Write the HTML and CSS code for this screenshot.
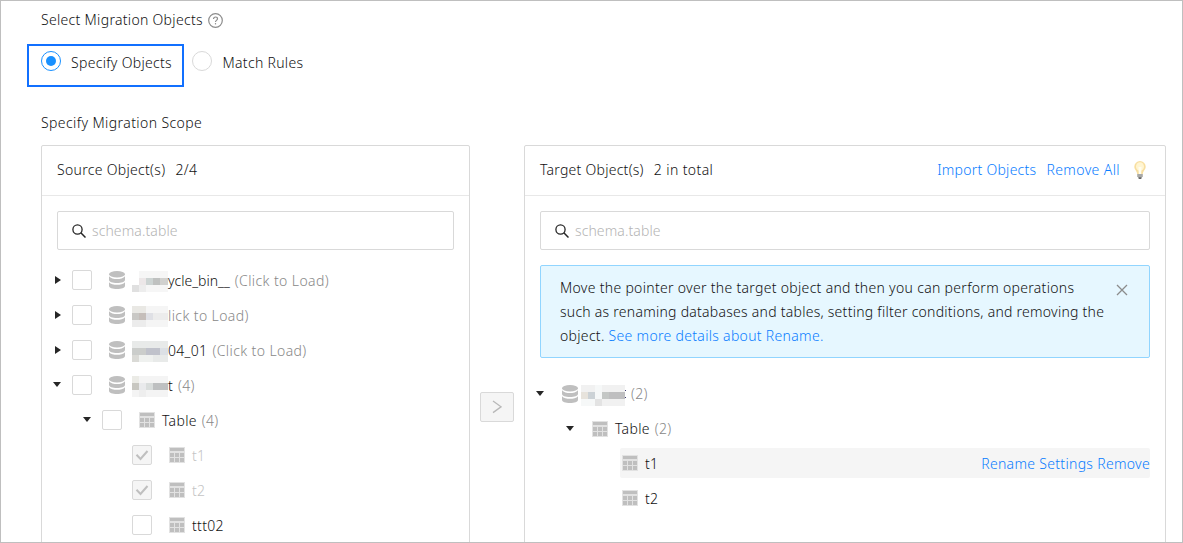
FILE: index.html
```html
<!DOCTYPE html>
<html lang="en">
<head>
<meta charset="utf-8">
<title>Select Migration Objects</title>
<link rel="stylesheet" href="styles.css">
</head>
<body>
<svg class="defs" aria-hidden="true">
  <symbol id="db" viewBox="0 0 16 18"><ellipse cx="8" cy="3.2" rx="8" ry="3.2"/><path d="M0 5.2C1.6 7.4 4.8 8 8 8s6.400-.6 8-2.800V9c0 1.700-3.600 3.100-8 3.100S0 10.700 0 9z"/><path d="M0 11.200C1.600 13.200 4.800 13.800 8 13.800s6.400-.6 8-2.600v3.700C16 16.600 12.400 18 8 18s-8-1.400-8-3.100z"/></symbol>
  <symbol id="table" viewBox="0 0 16 16"><path class="grid-back" d="M0 0h16v16H0z"/><path d="M1 1h14v3H1zM1 6h4v4H1zM6 6h4v4H6zM11 6h4v4h-4zM1 11h4v4H1zM6 11h4v4H6zM11 11h4v4h-4z"/></symbol>
  <symbol id="search" viewBox="0 0 14 14"><circle cx="5.500" cy="5.500" r="4.600" fill="none" stroke="currentColor" stroke-width="1.300"/><path d="M8.800 8.800l4.700 4.700" stroke="currentColor" stroke-width="1.500"/></symbol>
</svg>
<main class="page">
  <h1 class="title"><span>Select Migration Objects</span>
    <svg class="help" viewBox="0 0 15 15"><circle cx="7.500" cy="7.500" r="6.800"/><path d="M5.500 6.100c0-1.300.9-2.100 2-2.100s2 .8 2 1.800c0 1.500-2 1.600-2 3.100"/><path d="M7.500 10.100v1.300"/></svg>
  </h1>
  <div class="modes">
    <label class="mode mode-active"><i class="radio radio-on"></i><span>Specify Objects</span></label>
    <label class="mode"><i class="radio"></i><span>Match Rules</span></label>
  </div>
  <h2 class="scope"><span>Specify Migration Scope</span></h2>
  <div class="transfer">
    <section class="panel source">
      <header class="head"><span>Source Object(s)</span><span class="count">2/4</span></header>
      <div class="search"><svg><use href="#search"/></svg><span>schema.table</span></div>
      <div class="tree">
        <div class="row"><i class="caret right"></i><i class="check"></i><svg class="db"><use href="#db"/></svg>
          <svg class="mosaic" viewBox="0 0 36 21" shape-rendering="crispEdges"><path fill="#fff" d="M0 0h36v21H0z"/><path fill="#f6f6f6" d="M7 0h29v7H7zM14 14h22v7H14z"/><path fill="#ece7e8" d="M7 7h7v7H7z"/><path fill="#cdd4d3" d="M14 7h7v7h-7z"/><path fill="#bfc1c0" d="M21 7h7v7h-7z"/><path fill="#d1d1cf" d="M28 7h8v7h-8z"/><path fill="#e0e0e0" d="M0 14h7v7H0z"/><path fill="#ededed" d="M7 14h7v7H7z"/></svg>
          <span class="name tight">ycle_bin__</span><span class="note loose">(Click to Load)</span></div>
        <div class="row"><i class="caret right"></i><i class="check"></i><svg class="db"><use href="#db"/></svg>
          <svg class="mosaic" viewBox="0 0 36 21" shape-rendering="crispEdges"><path fill="#f5f5f5" d="M0 0h36v21H0z"/><path fill="#e9e8e4" d="M0 0h14v7H0z"/><path fill="#c9c8c5" d="M0 7h7v7H0z"/><path fill="#c5beba" d="M7 7h7v7H7z"/><path fill="#dfe0e5" d="M14 7h7v7h-7z"/><path fill="#ececec" d="M21 7h15v7H21zM0 14h14v7H0z"/></svg>
          <span class="note loose">lick to Load)</span></div>
        <div class="row"><i class="caret right"></i><i class="check"></i><svg class="db"><use href="#db"/></svg>
          <svg class="mosaic" viewBox="0 0 36 21" shape-rendering="crispEdges"><path fill="#e8eae9" d="M0 0h36v21H0z"/><path fill="#cbcdcb" d="M0 7h14v7H0z"/><path fill="#c0c2cb" d="M14 7h14v7H14z"/><path fill="#dce0e5" d="M28 7h8v7h-8z"/><path fill="#dadad6" d="M0 14h7v7H0z"/><path fill="#eff1ef" d="M7 14h14v7H7z"/></svg>
          <span class="name">04_01</span><span class="note loose">(Click to Load)</span></div>
        <div class="row"><i class="caret down"></i><i class="check"></i><svg class="db"><use href="#db"/></svg>
          <svg class="mosaic" viewBox="0 0 36 21" shape-rendering="crispEdges"><path fill="#f4f4f4" d="M0 0h36v21H0z"/><path fill="#ebebe6" d="M0 0h7v7H0z"/><path fill="#c8c7c1" d="M0 7h7v7H0z"/><path fill="#e9eaec" d="M7 7h7v7H7z"/><path fill="#d9dddc" d="M14 7h7v7h-7z"/><path fill="#bec0c1" d="M21 7h15v7H21z"/><path fill="#eee" d="M7 14h7v7H7z"/></svg>
          <span class="name">t</span><span class="note">(4)</span></div>
        <div class="row level-1"><i class="caret down"></i><i class="check"></i><svg class="tb"><use href="#table"/></svg><span class="name">Table</span><span class="note">(4)</span></div>
        <div class="row level-2 off"><i class="check checked"><svg viewBox="0 0 14 12"><path d="M1.500 5.800l4 4.200 7-8"/></svg></i><svg class="tb"><use href="#table"/></svg><span class="name">t1</span></div>
        <div class="row level-2 off"><i class="check checked"><svg viewBox="0 0 14 12"><path d="M1.500 5.800l4 4.200 7-8"/></svg></i><svg class="tb"><use href="#table"/></svg><span class="name">t2</span></div>
        <div class="row level-2"><i class="check"></i><svg class="tb"><use href="#table"/></svg><span class="name">ttt02</span></div>
      </div>
    </section>
    <button class="move" type="button" aria-label="Move"><svg viewBox="0 0 10 14"><path d="M1 1l8 5.800L1 12.600"/></svg></button>
    <section class="panel target">
      <header class="head"><span class="snug">Target Object(s)</span><span class="count">2 in total</span>
        <nav class="actions"><a class="snug">Import Objects</a><a class="loose">Remove All</a>
          <svg class="bulb" viewBox="0 0 12 18"><path fill="#f8dfa0" d="M6 0a5.700 5.700 0 0 0-5.700 5.700C.3 8.800 3 9.800 3.200 13h5.600C9 9.800 11.700 8.800 11.700 5.700A5.700 5.700 0 0 0 6 0z"/><ellipse cx="6" cy="5.500" rx="4" ry="4.300" fill="#fff5d2"/><path fill="#fffdf0" d="M4.500 6h3L7.200 13H4.800z"/><path fill="#a9a9a6" d="M3.200 13h5.600v2.600L7.300 17H4.700l-1.500-1.400z"/><path fill="#666" d="M4.600 16.300h2.800V18H4.600z"/></svg>
        </nav></header>
      <div class="search"><svg><use href="#search"/></svg><span>schema.table</span></div>
      <div class="alert"><p>Move the pointer over the target object and then you can perform operations<br><span class="snug">such as renaming databases and tables, setting filter conditions, and removing the</span><br>object. <a>See more details about Rename.</a></p>
        <svg class="close" viewBox="0 0 12 12"><path d="M1 1l10 10M11 1L1 11"/></svg></div>
      <div class="tree">
        <div class="row"><i class="caret down"></i><svg class="db"><use href="#db"/></svg>
          <svg class="mosaic wide" viewBox="0 0 44 21" shape-rendering="crispEdges"><path fill="#f1f1f1" d="M0 0h44v21H0z"/><path fill="#f6f8f8" d="M14 0h7v14h-7zM0 14h14v7H0z"/><path fill="#e7e3dc" d="M0 7h7v7H0z"/><path fill="#ccd2d6" d="M7 7h7v7H7z"/><path fill="#c4c7c5" d="M21 7h7v7h-7z"/><path fill="#bfbfc0" d="M28 7h16v7H28z"/><path fill="#e3e3e3" d="M14 14h7v7h-7z"/></svg>
          <i class="sliver"></i><span class="note">(2)</span></div>
        <div class="row level-1"><i class="caret down"></i><svg class="tb"><use href="#table"/></svg><span class="name">Table</span><span class="note">(2)</span></div>
        <div class="row level-2 hover"><svg class="tb"><use href="#table"/></svg><span class="name">t1</span><nav class="ops"><a>Rename</a><a>Settings</a><a>Remove</a></nav></div>
        <div class="row level-2"><svg class="tb"><use href="#table"/></svg><span class="name">t2</span></div>
      </div>
    </section>
  </div>
</main>
</body>
</html>
```
FILE: styles.css
```css
* { box-sizing: border-box; }
body { margin: 0; background: #fff; color: #111; font: 300 14px/22px "Noto Sans", "Open Sans", sans-serif; letter-spacing: .31px; }
.defs { position: absolute; width: 0; height: 0; }
.page { display: flex; flex-direction: column; height: 543px; padding: 8px 16px 0 26px; border: 1px solid #bfbfbf; overflow: hidden; white-space: nowrap; }
a { color: #087cff; }
.tight { letter-spacing: 0; }
.snug { letter-spacing: .26px; }
.loose { letter-spacing: .4px; }
.title, .scope { display: flex; align-items: center; height: 22px; margin: 0 0 0 14px; font: inherit; }
.title { gap: 5px; }
.help { width: 15px; height: 15px; fill: none; stroke: #8c8c8c; stroke-width: 1.2; }
.modes { display: flex; height: 43px; margin-top: 13px; flex: none; }
.mode { display: flex; gap: 10.5px; padding: 7px 0 0 8px; }
.mode span { padding-top: 1px; line-height: 22px; }
.mode-active { gap: 10px; width: 157px; height: 43px; padding: 5px 0 0 12px; border: 2px solid #1170ff; }
.radio { width: 20px; height: 20px; border: 1px solid #d9d9d9; border-radius: 50%; flex: none; }
.radio-on { display: flex; align-items: center; justify-content: center; border-color: #1890ff; }
.radio-on::after { content: ""; width: 10px; height: 10px; border-radius: 50%; background: #1890ff; }
.scope { margin-top: 25px; flex: none; letter-spacing: .41px; }
.transfer { display: flex; align-items: flex-start; margin: 11px 0 0 14px; }
.panel { height: 500px; border: 1px solid #d9d9d9; border-radius: 2px; }
.source { width: 429px; }
.target { width: 642px; }
.head { display: flex; align-items: center; height: 50px; padding: 0 15px 2px; border-bottom: 1px solid #e8e8e8; }
.count { margin-left: 10px; letter-spacing: .4px; }
.actions { display: flex; align-items: center; gap: 10px; margin-left: auto; margin-right: 4px; }
.bulb { width: 12px; height: 18px; margin-left: 4px; }
.search { display: flex; align-items: center; gap: 6px; height: 39px; margin: 15px 15px 0; padding-left: 14px; border: 1px solid #d9d9d9; border-radius: 2px; color: #b4b4b4; letter-spacing: .1px; }
.search svg { width: 14px; height: 14px; color: #262626; }
.source .tree { padding: 12px 0 0 9px; }
.target .tree { padding: 18px 15px 0 9px; }
.row { display: flex; align-items: center; height: 35px; }
.source .row span { padding-top: 2px; }
.source .level-1 { padding-left: 30px; }
.source .level-2 { padding-left: 81px; }
.caret { display: flex; align-items: center; justify-content: center; width: 12px; margin-right: 9px; flex: none; }
.caret::after { content: ""; border: solid transparent; }
.right::after { border-width: 4.5px 0 4.5px 6px; border-left-color: #262626; margin-left: 1px; }
.down::after { border-width: 5px 4.5px 0; border-top-color: #262626; }
.check { display: flex; align-items: center; justify-content: center; width: 20px; height: 20px; margin-right: 17px; border: 1px solid #d9d9d9; border-radius: 2px; flex: none; }
.checked { background: #f5f5f5; }
.checked svg { width: 14px; height: 12px; fill: none; stroke: #bfbfbf; stroke-width: 2; }
.db { width: 16px; height: 18px; margin-right: 7px; fill: #bfbfbf; flex: none; }
.tb { width: 16px; height: 16px; margin-right: 7px; fill: #bfbfbf; flex: none; }
.grid-back { fill: #e2e2e2; }
.mosaic { width: 36px; height: 21px; margin-top: 3px; flex: none; }
.wide { width: 44px; }
.note { margin-left: 5px; color: #888; }
.mosaic + .note { margin-left: 0; }
.off .name { color: #c4c4c4; }
.move { display: flex; align-items: center; justify-content: center; width: 34px; height: 30px; margin: 247px 10px 0; padding: 0; border: 1px solid #d9d9d9; border-radius: 2px; background: #f5f5f5; }
.move svg { width: 10px; height: 14px; fill: none; stroke: #b8b8b8; stroke-width: 1.300; }
.alert { display: flex; justify-content: space-between; height: 93px; margin: 15px 15px 0; padding: 10px 21px 0 19px; border: 1px solid #91d5ff; border-radius: 2px; background: #e6f7ff; line-height: 24px; }
.alert p { margin: 0; }
.close { width: 12px; height: 12px; margin-top: 8px; stroke: #8c8c8c; stroke-width: 1.300; }
.target .caret { margin-right: 16px; }
.target .db { margin-right: 3px; }
.target .level-1 { padding-left: 30px; }
.sliver { width: 1px; height: 8px; border: solid #3c3870; border-width: 1px 0; }
.target .level-2 { height: 30px; margin: 2px 0 3px 86px; padding-left: 2px; }
.target .level-2 + .level-2 { margin-top: 5px; }
.target .level-2 .name, .ops { padding-top: 2px; }
.hover { border-radius: 2px; background: #f5f5f5; }
.ops { display: flex; gap: 4px; margin-left: auto; }
```
